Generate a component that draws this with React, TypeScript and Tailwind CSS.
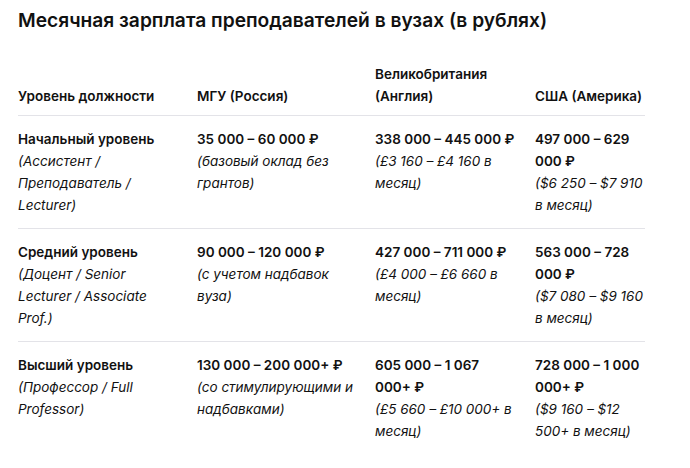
import React from "react";

type Row = { title: string; sub: string; cells: { main: string; sub: string }[] };

const rows: Row[] = [
  {
    title: "Начальный уровень",
    sub: "(Ассистент / Преподаватель / Lecturer)",
    cells: [
      { main: "35 000 – 60 000 ₽", sub: "(базовый оклад без грантов)" },
      { main: "338 000 – 445 000 ₽", sub: "(£3 160 – £4 160 в месяц)" },
      { main: "497 000 – 629 000 ₽", sub: "($6 250 – $7 910 в месяц)" },
    ],
  },
  {
    title: "Средний уровень",
    sub: "(Доцент / Senior Lecturer / Associate Prof.)",
    cells: [
      { main: "90 000 – 120 000 ₽", sub: "(с учетом надбавок вуза)" },
      { main: "427 000 – 711 000 ₽", sub: "(£4 000 – £6 660 в месяц)" },
      { main: "563 000 – 728 000 ₽", sub: "($7 080 – $9 160 в месяц)" },
    ],
  },
  {
    title: "Высший уровень",
    sub: "(Профессор / Full Professor)",
    cells: [
      { main: "130 000 – 200 000+ ₽", sub: "(со стимулирующими и надбавками)" },
      { main: "605 000 – 1 067 000+ ₽", sub: "(£5 660 – £10 000+ в месяц)" },
      { main: "728 000 – 1 000 000+ ₽", sub: "($9 160 – $12 500+ в месяц)" },
    ],
  },
];

export default function App() {
  return (
    <div
      className="w-[690px] h-[468px] bg-white text-[#111] overflow-hidden pl-[18px] pt-[8px]"
      style={{ fontFamily: "Inter, 'Noto Sans', sans-serif" }}
    >
      <h1 className="text-[19.2px] leading-[25px] font-semibold">
        Месячная зарплата преподавателей в вузах (в рублях)
      </h1>
      <table className="mt-[30px] w-[627px] table-fixed border-collapse text-[13.5px] leading-[22px]">
        <colgroup>
          <col className="w-[179px]" />
          <col className="w-[178px]" />
          <col className="w-[160px]" />
          <col />
        </colgroup>
        <thead>
          <tr className="border-b border-[#e3e3e8]">
            <th className="text-left align-bottom font-semibold pb-2 pr-4">Уровень должности</th>
            <th className="text-left align-bottom font-semibold pb-2 pr-4">МГУ (Россия)</th>
            <th className="text-left align-bottom font-semibold pb-2 pr-[20px]">Великобритания (Англия)</th>
            <th className="text-left align-bottom font-semibold pb-2">США (Америка)</th>
          </tr>
        </thead>
        <tbody>
          {rows.map((r, i) => (
            <tr key={i} className={i < rows.length - 1 ? "border-b border-[#e3e3e8]" : ""}>
              <td className="align-top py-3 pr-4">
                <div className="font-semibold">{r.title}</div>
                <div className="italic">{r.sub}</div>
              </td>
              {r.cells.map((c, j) => (
                <td key={j} className={"align-top py-3 " + (j === 0 ? "pr-4" : j === 1 ? "pr-[20px]" : "")}>
                  <div className="font-semibold">{c.main}</div>
                  <div className="italic">{c.sub}</div>
                </td>
              ))}
            </tr>
          ))}
        </tbody>
      </table>
    </div>
  );
}
